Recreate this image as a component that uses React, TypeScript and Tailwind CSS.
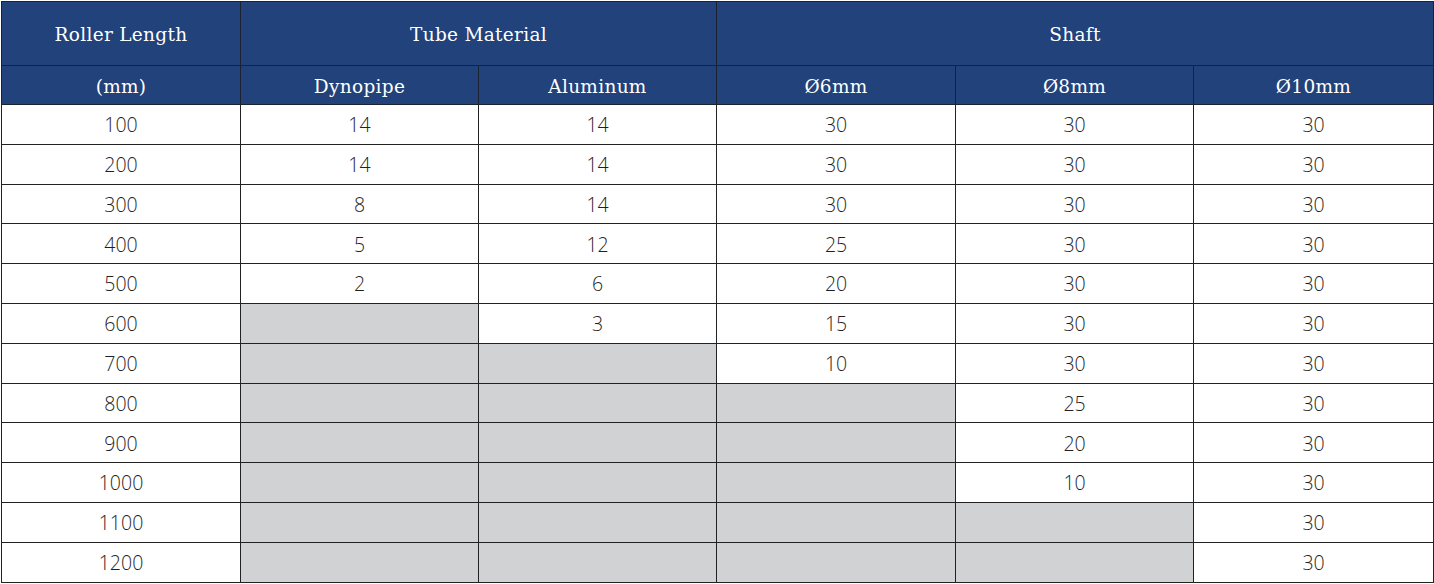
const ROWS: { len: string; vals: (string | null)[] }[] = [
  { len: "100", vals: ["14", "14", "30", "30", "30"] },
  { len: "200", vals: ["14", "14", "30", "30", "30"] },
  { len: "300", vals: ["8", "14", "30", "30", "30"] },
  { len: "400", vals: ["5", "12", "25", "30", "30"] },
  { len: "500", vals: ["2", "6", "20", "30", "30"] },
  { len: "600", vals: [null, "3", "15", "30", "30"] },
  { len: "700", vals: [null, null, "10", "30", "30"] },
  { len: "800", vals: [null, null, null, "25", "30"] },
  { len: "900", vals: [null, null, null, "20", "30"] },
  { len: "1000", vals: [null, null, null, "10", "30"] },
  { len: "1100", vals: [null, null, null, null, "30"] },
  { len: "1200", vals: [null, null, null, null, "30"] },
];

const HEAD = "border border-[#1c2230] bg-[#21427a] pt-[3px] text-center font-normal text-white";
const CELL = "h-[39.8px] border border-[#222] p-0 pt-px text-center";

export default function App() {
  return (
    <div className="w-[1434px] bg-white px-px pt-px">
      <table className="w-[1432px] table-fixed border-collapse font-['Open_Sans',sans-serif] text-[19.5px] font-light text-[#1f1f1f]">
        <colgroup>
          <col className="w-[239px]" />
          <col className="w-[238px]" />
          <col className="w-[238px]" />
          <col className="w-[239px]" />
          <col className="w-[238px]" />
          <col className="w-[240px]" />
        </colgroup>
        <thead className="font-['DejaVu_Serif',serif] text-[18.5px] tracking-[0.3px]">
          <tr className="h-[64px]">
            <th className={HEAD}>Roller Length</th>
            <th colSpan={2} className={HEAD}>Tube Material</th>
            <th colSpan={3} className={HEAD}>Shaft</th>
          </tr>
          <tr className="h-[39px]">
            <th className={HEAD}>(mm)</th>
            <th className={HEAD}>Dynopipe</th>
            <th className={HEAD}>Aluminum</th>
            <th className={HEAD}>Ø6mm</th>
            <th className={HEAD}>Ø8mm</th>
            <th className={HEAD}>Ø10mm</th>
          </tr>
        </thead>
        <tbody>
          {ROWS.map((row) => (
            <tr key={row.len}>
              <td className={CELL}>{row.len}</td>
              {row.vals.map((v, i) =>
                v === null ? (
                  <td key={i} className={`${CELL} bg-[#d1d2d4]`} />
                ) : (
                  <td key={i} className={CELL}>
                    {v}
                  </td>
                ),
              )}
            </tr>
          ))}
        </tbody>
      </table>
    </div>
  );
}
